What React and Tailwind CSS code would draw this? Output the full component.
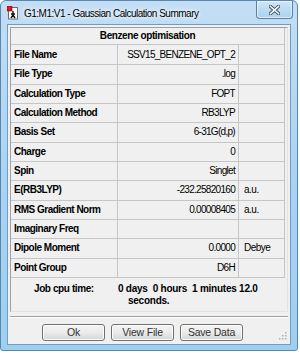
import React from "react";

const rows = [
  ["File Name", "SSV15_BENZENE_OPT_2", ""],
  ["File Type", ".log", ""],
  ["Calculation Type", "FOPT", ""],
  ["Calculation Method", "RB3LYP", ""],
  ["Basis Set", "6-31G(d,p)", ""],
  ["Charge", "0", ""],
  ["Spin", "Singlet", ""],
  ["E(RB3LYP)", "-232.25820160", "a.u."],
  ["RMS Gradient Norm", "0.00008405", "a.u."],
  ["Imaginary Freq", "", ""],
  ["Dipole Moment", "0.0000", "Debye"],
  ["Point Group", "D6H", ""],
];

const font = { fontFamily: '"Liberation Sans", Arial, sans-serif' };

function GaussIcon() {
  return (
    <svg width="12" height="14" viewBox="0 0 12 14">
      <rect x="1.5" y="1.5" width="9" height="11.5" fill="#fff" stroke="#6d6d6d" />
      <rect x="0" y="0" width="5" height="5" fill="#e01818" stroke="#7a0000" strokeWidth="0.6" />
      <path d="M6 5 L6 9 M4 12 L6 9 L8 12 M4 8 L8 8" stroke="#111" strokeWidth="1.4" fill="none" />
    </svg>
  );
}

function CloseButton() {
  return (
    <div className="absolute top-0 right-[4px] w-[37px] h-[18px] rounded-b-[4px] border border-t-0 border-[#5d7f9e] bg-gradient-to-b from-[#cde6f8] to-[#a9d2ef] flex items-center justify-center shadow-[inset_0_0_0_1px_rgba(255,255,255,0.6)]">
      <svg width="11" height="10" viewBox="0 0 11 10">
        <path d="M1.5 1.5 L9.5 8.5 M9.5 1.5 L1.5 8.5" stroke="#3a4f66" strokeWidth="3.4" strokeLinecap="square" />
        <path d="M1.5 1.5 L9.5 8.5 M9.5 1.5 L1.5 8.5" stroke="#ffffff" strokeWidth="1.6" strokeLinecap="square" />
      </svg>
    </div>
  );
}

function WinButton({ children }) {
  return (
    <button className="w-[63px] h-[17px] rounded-[3px] border border-[#707070] bg-gradient-to-b from-[#f4f4f4] via-[#ebebeb] to-[#d6d6d6] text-[10.5px] leading-none text-[#333] tracking-[-0.2px] shadow-[inset_0_0_0_1px_#fcfcfc]">
      {children}
    </button>
  );
}

export default function App() {
  return (
    <div className="w-[300px] h-[354px] bg-white" style={font}>
      <div className="relative w-[298px] h-[351px] rounded-t-[6px] rounded-b-[3px] border border-[#5a87b0] bg-gradient-to-b from-[#c3def4] via-[#aad3f0] to-[#9fcfee] flex flex-col">
        <div className="h-[23px] flex items-center pl-[6px] gap-[5px]">
          <GaussIcon />
          <span className="text-[10px] tracking-[-0.5px] text-black mt-[1px]" style={{ textShadow: "0 0 6px #fff, 0 0 4px #fff" }}>
            G1:M1:V1 - Gaussian Calculation Summary
          </span>
        </div>
        <CloseButton />

        <div className="mx-[6px] mb-[5px] flex-1 bg-[#f0f0f0] border border-[#6c9dc9] flex flex-col">
          <div className="mt-[2px] mx-[2px] h-[285px] border border-[#a0a0a0] border-r-[#e3e3e3] border-b-[#e3e3e3] flex flex-col">
            <div className="mr-[2px] border-r border-b border-[#c6c6c6] text-[10px] leading-none text-black">
              <div className="h-[17px] flex items-center justify-center font-bold tracking-[-0.4px] border-b border-[#c6c6c6]">
                Benzene optimisation
              </div>
              {rows.map(([label, value, unit], i) => (
                <div key={label} className={`h-[19.33px] grid grid-cols-[107px_121px_1fr] ${i > 0 ? "border-t border-[#c6c6c6]" : ""}`}>
                  <div className="flex items-center pl-[3px] font-bold tracking-[-0.5px] border-r border-[#c6c6c6]">{label}</div>
                  <div className="flex items-center justify-end pr-[3px] tracking-[-0.7px] border-r border-[#c6c6c6]">{value}</div>
                  <div className="flex items-center pl-[5px] tracking-[-0.5px]">{unit}</div>
                </div>
              ))}
            </div>
            <div className="flex text-[10px] leading-[12px] font-bold text-black pt-[5px]">
              <div className="w-[107px] pl-[23px] tracking-[-0.4px]">Job cpu time:</div>
              <div className="tracking-[-0.25px]">
                <div>0 days&nbsp; 0 hours&nbsp; 1 minutes 12.0</div>
                <div className="pl-[10px]">seconds.</div>
              </div>
            </div>
          </div>
          <div className="mt-[4px] mx-[2px] border-t border-[#a0a0a0] border-b border-b-white" />
          <div className="relative flex-1 flex items-start pt-[6px] pl-[34px] gap-[6px]">
            <WinButton>Ok</WinButton>
            <WinButton>View File</WinButton>
            <WinButton>Save Data</WinButton>
            <svg className="absolute right-[3px] bottom-[4px]" width="8" height="8" viewBox="0 0 8 8">
              <g fill="#b0b0b0">
                <rect x="6" y="0" width="1.5" height="1.5" />
                <rect x="3" y="3" width="1.5" height="1.5" />
                <rect x="6" y="3" width="1.5" height="1.5" />
                <rect x="0" y="6" width="1.5" height="1.5" />
                <rect x="3" y="6" width="1.5" height="1.5" />
                <rect x="6" y="6" width="1.5" height="1.5" />
              </g>
            </svg>
          </div>
        </div>
      </div>
    </div>
  );
}
